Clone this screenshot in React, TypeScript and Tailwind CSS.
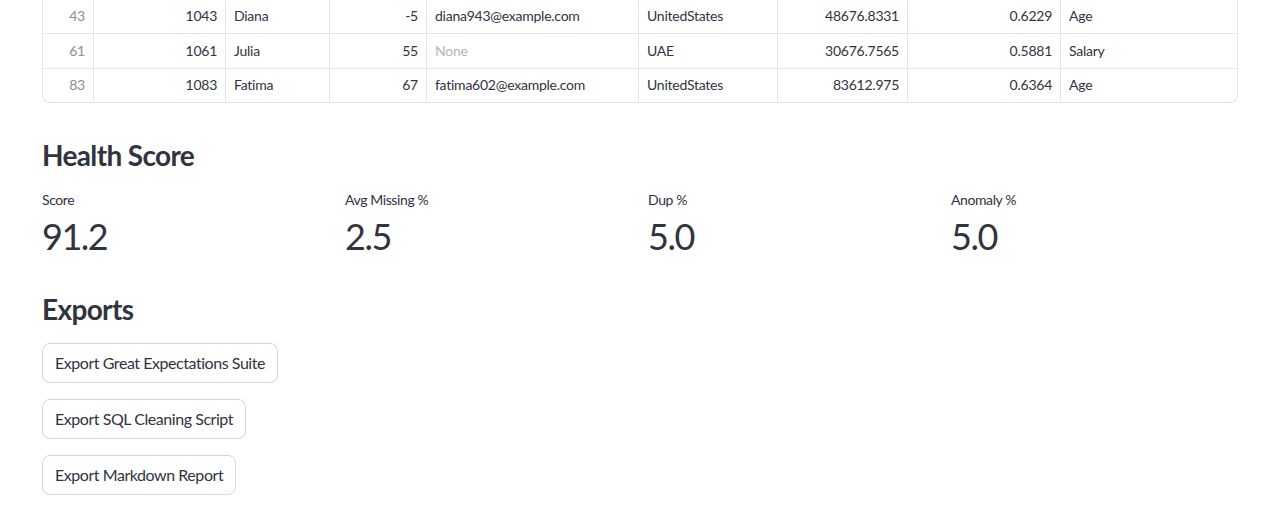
import React from 'react';

type Cell = { v: string; right?: boolean; muted?: boolean };

const widths = ['w-[51px]', 'w-[132px]', 'w-[104px]', 'w-[97px]', 'w-[212px]', 'w-[139px]', 'w-[130px]', 'w-[153px]', 'w-[176px]'];

const rows: Cell[][] = [
  [
    { v: '43', right: true },
    { v: '1043', right: true },
    { v: 'Diana' },
    { v: '-5', right: true },
    { v: 'diana943@example.com' },
    { v: 'UnitedStates' },
    { v: '48676.8331', right: true },
    { v: '0.6229', right: true },
    { v: 'Age' },
  ],
  [
    { v: '61', right: true },
    { v: '1061', right: true },
    { v: 'Julia' },
    { v: '55', right: true },
    { v: 'None', muted: true },
    { v: 'UAE' },
    { v: '30676.7565', right: true },
    { v: '0.5881', right: true },
    { v: 'Salary' },
  ],
  [
    { v: '83', right: true },
    { v: '1083', right: true },
    { v: 'Fatima' },
    { v: '67', right: true },
    { v: 'fatima602@example.com' },
    { v: 'UnitedStates' },
    { v: '83612.975', right: true },
    { v: '0.6364', right: true },
    { v: 'Age' },
  ],
];

const rowHeights = ['h-[34px] border-b', 'h-[35px] border-b', 'h-[33px]'];

const metrics = [
  { label: 'Score', value: '91.2' },
  { label: 'Avg Missing %', value: '2.5' },
  { label: 'Dup %', value: '5.0' },
  { label: 'Anomaly %', value: '5.0' },
];

const exportsList = ['Export Great Expectations Suite', 'Export SQL Cleaning Script', 'Export Markdown Report'];

export default function App() {
  return (
    <div className="min-h-[529px] bg-white text-[#31333F] font-['Lato',sans-serif]">
      <div className="ml-[42px] w-[1196px]">
        {/* data table, scrolled so only its last rows show */}
        <div className="overflow-hidden rounded-b-lg border border-t-0 border-[#e6e6e8] text-[14px] tracking-[-0.25px]">
          {rows.map((row, i) => (
            <div key={i} className={`flex border-[#e6e6e8] ${rowHeights[i]}`}>
              {row.map((c, j) => (
                <div
                  key={j}
                  className={`${widths[j]} flex shrink-0 items-center px-2 pb-[2px] ${j < 8 ? 'border-r border-[#e6e6e8]' : ''} ${
                    c.right ? 'justify-end' : 'justify-start'
                  } ${j === 0 ? 'text-[#8b8d94]' : c.muted ? 'text-[#b4b5ba]' : ''}`}
                >
                  {c.v}
                </div>
              ))}
            </div>
          ))}
        </div>

        {/* Health score */}
        <h3 className="mt-[35px] text-[28px] leading-[34px] font-bold tracking-[-0.65px]">Health Score</h3>
        <div className="mt-[16px] grid grid-cols-4 gap-4">
          {metrics.map((m) => (
            <div key={m.label}>
              <div className="text-[14px] leading-[24px] tracking-[-0.4px]">{m.label}</div>
              <div className="mt-[2px] text-[36px] leading-[44px] tracking-[-1.5px]">{m.value}</div>
            </div>
          ))}
        </div>

        {/* Exports */}
        <h3 className="mt-[34px] text-[28px] leading-[34px] font-bold tracking-[-0.65px]">Exports</h3>
        <div className="mt-[17px] flex flex-col items-start gap-4">
          {exportsList.map((label) => (
            <button
              key={label}
              className="h-[40px] rounded-lg border border-[#d5d6d9] bg-white px-3 text-[16px] tracking-[-0.45px]"
            >
              {label}
            </button>
          ))}
        </div>
      </div>
    </div>
  );
}
